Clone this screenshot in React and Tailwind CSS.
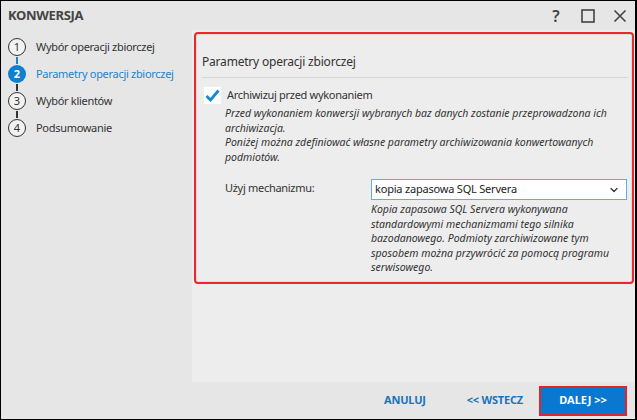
import React from "react";
import { ChevronDown } from "lucide-react";

const STEPS = [
  { n: 1, label: "Wybór operacji zbiorczej" },
  { n: 2, label: "Parametry operacji zbiorczej", active: true },
  { n: 3, label: "Wybór klientów" },
  { n: 4, label: "Podsumowanie" },
];

const font = { fontFamily: '"Noto Sans", "Open Sans", sans-serif' };

const App = () => {
  return (
    <div className="w-[637px] h-[420px] bg-black p-px pr-[2px]" style={font}>
      <div className="w-full h-full bg-[#e6e6e6] flex flex-col text-[#333]">
        {/* title bar */}
        <div className="h-[29px] flex items-center justify-between pl-[7px] pr-[8px] shrink-0">
          <h1 className="text-[13px] font-bold text-[#444] tracking-tight">KONWERSJA</h1>
          <div className="flex items-center gap-[18px] text-[#444]">
            <span className="text-[16px] font-semibold w-[14px] text-center">?</span>
            <svg width="14" height="14" viewBox="0 0 14 14"><rect x="1" y="1" width="12" height="12" fill="none" stroke="#444" strokeWidth="1.6" /></svg>
            <svg width="14" height="14" viewBox="0 0 14 14"><path d="M1.5 1.5l11 11M12.5 1.5l-11 11" stroke="#444" strokeWidth="1.6" /></svg>
          </div>
        </div>

        <div className="flex flex-1 min-h-0">
          {/* steps */}
          <div className="w-[191px] shrink-0 pl-[7px] pt-[7px]">
            {STEPS.map((s, i) => (
              <div key={s.n} className="flex flex-col">
                <div className="flex items-center gap-[10px] h-[20px]">
                  <div
                    className={`w-[18px] h-[18px] rounded-full flex items-center justify-center text-[11px] ${
                      s.active ? "bg-[#0f7fd0] text-white font-bold" : "border-[1.5px] border-[#333] bg-[#f2f2f2] text-[#333]"
                    }`}
                  >
                    {s.n}
                  </div>
                  <span className={`text-[11px] tracking-[-0.3px] ${s.active ? "text-[#1f82cc]" : "text-[#333]"}`}>{s.label}</span>
                </div>
                {i < STEPS.length - 1 && (
                  <div className={`ml-[8px] w-[1.5px] h-[7px] ${i === 0 ? "bg-[#1f82cc]" : "bg-[#333]"}`} />
                )}
              </div>
            ))}
          </div>

          {/* main */}
          <div className="flex-1 flex flex-col">
            <div className="flex-1 bg-[#ededed] p-[2px] pr-[1px]">
              <div className="h-[252px] border-2 border-[#f0262d] rounded-[4px] shadow-[inset_0_0_0_1px_#dcdcdc] pl-[6px] pr-[4px] pt-[19px]">
                <div className="text-[12px] tracking-[-0.2px] text-[#333] pb-[6px] border-b border-[#d6d6d6]">Parametry operacji zbiorczej</div>
                <div className="flex items-center gap-[6px] mt-[9px] pl-[2px]">
                  <div className="w-[17px] h-[17px] bg-white flex items-center justify-center">
                    <svg width="15" height="13" viewBox="0 0 15 13"><path d="M1.5 7l4 4 8-9.5" fill="none" stroke="#1686d6" strokeWidth="2.8" /></svg>
                  </div>
                  <span className="text-[11px] tracking-[-0.3px]">Archiwizuj przed wykonaniem</span>
                </div>
                <div className="pl-[23px] pr-[20px] mt-[2px] text-[10.5px] italic leading-[14.5px] text-[#333]">
                  <p>Przed wykonaniem konwersji wybranych baz danych zostanie przeprowadzona ich<br />archiwizacja.</p>
                  <p>Poniżej można zdefiniować własne parametry archiwizowania konwertowanych<br />podmiotów.</p>
                </div>
                <div className="flex mt-[15px] pl-[23px]">
                  <div className="w-[146px] text-[11px] tracking-[-0.3px] pt-[1px]">Użyj mechanizmu:</div>
                  <div className="flex-1 pr-[1px]">
                    <div className="h-[21px] bg-white border border-[#5ab0e0] flex items-center justify-between pl-[3px] pr-[6px]">
                      <span className="text-[11px] tracking-[-0.2px] text-[#222]">kopia zapasowa SQL Servera</span>
                      <ChevronDown size={12} strokeWidth={2.5} className="text-[#333]" />
                    </div>
                    <p className="text-[10.5px] italic leading-[14.5px] mt-[2px]">
                      Kopia zapasowa SQL Servera wykonywana<br />
                      standardowymi mechanizmami tego silnika<br />
                      bazodanowego. Podmioty zarchiwizowane tym<br />
                      sposobem można przywrócić za pomocą programu<br />
                      serwisowego.
                    </p>
                  </div>
                </div>
              </div>
            </div>

            {/* footer */}
            <div className="h-[37px] shrink-0 flex items-center justify-end pr-[8px]">
              <button className="text-[11px] font-bold text-[#1a73b8] tracking-[-0.2px] mr-[41px]">ANULUJ</button>
              <button className="text-[11px] font-bold text-[#1a73b8] tracking-[-0.2px] mr-[16px]">&lt;&lt; WSTECZ</button>
              <button className="w-[88px] h-[30px] bg-[#0a78d0] border-2 border-[#e0242c] text-white text-[11px] font-bold">DALEJ &gt;&gt;</button>
            </div>
          </div>
        </div>
      </div>
    </div>
  );
};

export default App;
